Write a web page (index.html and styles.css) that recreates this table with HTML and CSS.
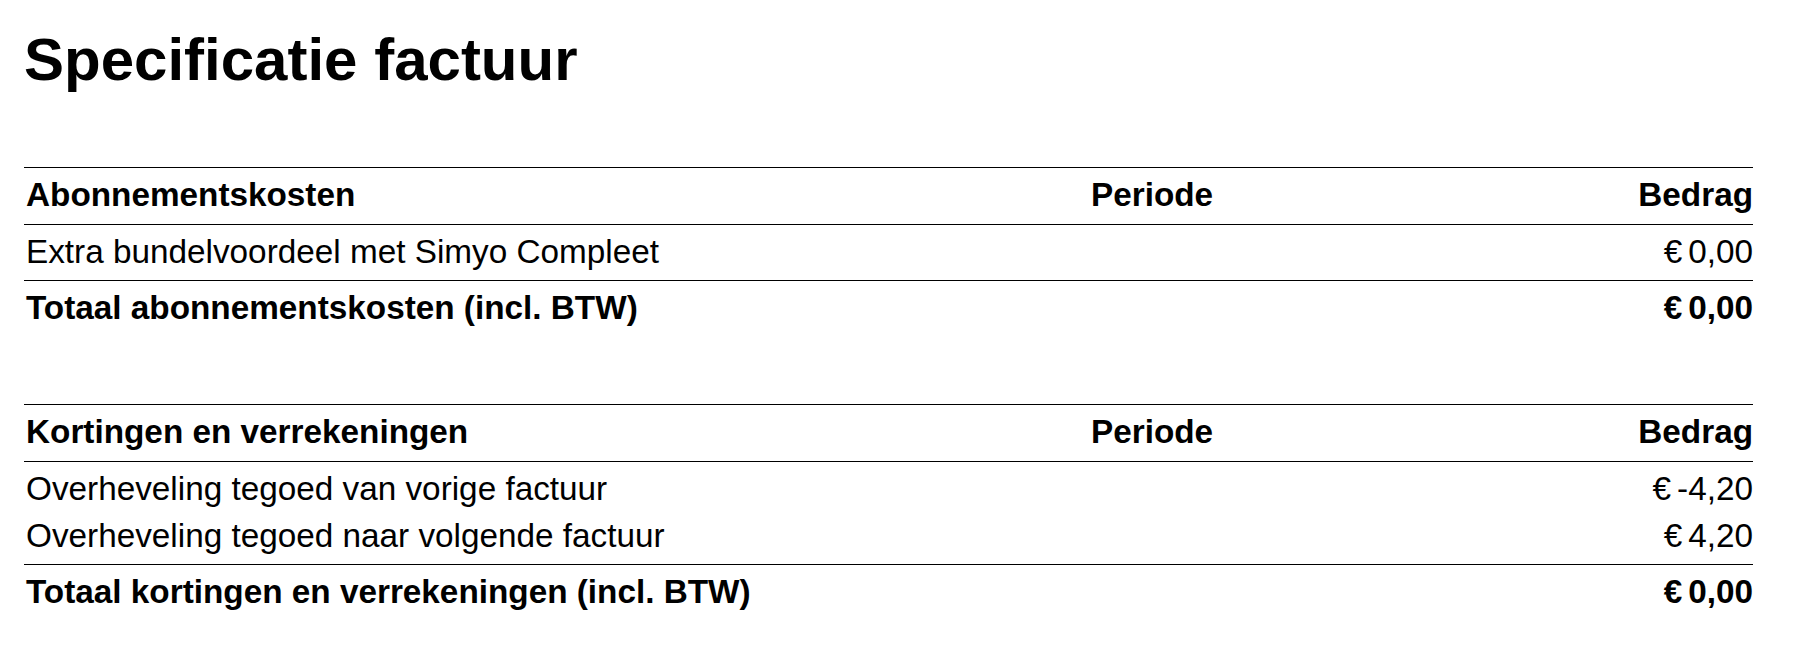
FILE: index.html
```html
<!DOCTYPE html>
<html lang="nl">
<head>
<meta charset="utf-8">
<title>Specificatie factuur</title>
<link rel="stylesheet" href="styles.css">
</head>
<body>
<main class="page">
  <h1 class="title">Specificatie factuur</h1>

  <section class="spec">
    <div class="row head">
      <div>Abonnementskosten</div>
      <div>Periode</div>
      <div class="amt">Bedrag</div>
    </div>
    <div class="group">
      <div class="row">
        <div>Extra bundelvoordeel met Simyo Compleet</div>
        <div></div>
        <div class="amt"><span class="cur">€</span>0,00</div>
      </div>
    </div>
    <div class="row total">
      <div>Totaal abonnementskosten (incl. BTW)</div>
      <div></div>
      <div class="amt"><span class="cur">€</span>0,00</div>
    </div>
  </section>

  <section class="spec second">
    <div class="row head">
      <div>Kortingen en verrekeningen</div>
      <div>Periode</div>
      <div class="amt">Bedrag</div>
    </div>
    <div class="group">
      <div class="row">
        <div>Overheveling tegoed van vorige factuur</div>
        <div></div>
        <div class="amt"><span class="cur">€</span>-4,20</div>
      </div>
      <div class="row">
        <div>Overheveling tegoed naar volgende factuur</div>
        <div></div>
        <div class="amt"><span class="cur">€</span>4,20</div>
      </div>
    </div>
    <div class="row total">
      <div>Totaal kortingen en verrekeningen (incl. BTW)</div>
      <div></div>
      <div class="amt"><span class="cur">€</span>0,00</div>
    </div>
  </section>
</main>
</body>
</html>
```

FILE: styles.css
```css
html, body {
  margin: 0;
  padding: 0;
  background: #fff;
}

body {
  font-family: "Liberation Sans", Arial, Helvetica, sans-serif;
  color: #000;
}

.page {
  padding: 26px 0 0 24px;
  width: 1729px;
}

.title {
  margin: 0;
  font-size: 60px;
  line-height: 68px;
  font-weight: bold;
}

.spec {
  margin-top: 73px;
}

.spec.second {
  margin-top: 67px;
}

.row {
  display: grid;
  grid-template-columns: 1065px 1fr auto;
  font-size: 33.3px;
  line-height: 47px;
  padding: 0 0 0 2px;
  white-space: nowrap;
}

.head {
  font-weight: bold;
  padding-top: 3px;
  padding-bottom: 6px;
  border-top: 1px solid #000;
  border-bottom: 1px solid #000;
}

.group {
  padding: 3px 0 5px;
  border-bottom: 1px solid #000;
}

.total {
  font-weight: bold;
  padding-top: 3px;
  padding-bottom: 6px;
}

.amt {
  text-align: right;
}

.cur {
  margin-right: 0.18em;
}
```
